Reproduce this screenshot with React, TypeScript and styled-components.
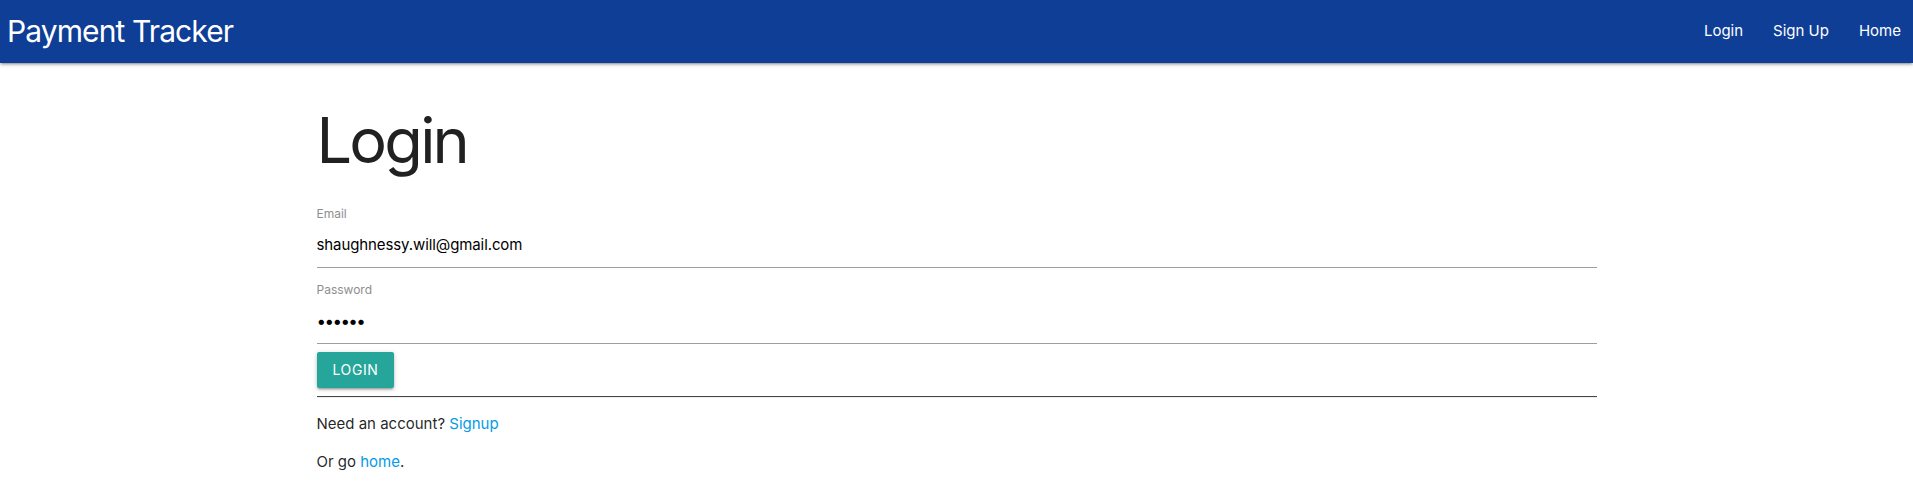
import React from 'react';
import styled, { createGlobalStyle } from 'styled-components';

const GlobalStyle = createGlobalStyle`
  html {
    font-size: 15px;
  }
  body {
    margin: 0;
    background: #fff;
    font-family: Inter, "Noto Sans", Roboto, sans-serif;
    color: rgba(0, 0, 0, 0.87);
    line-height: 1.5;
  }
`;

const Nav = styled.nav`
  height: 63px;
  background: #0e3e96;
  color: #fff;
  display: flex;
  align-items: center;
  justify-content: space-between;
  box-shadow: 0 2px 2px 0 rgba(0, 0, 0, 0.14), 0 3px 1px -2px rgba(0, 0, 0, 0.12),
    0 1px 5px 0 rgba(0, 0, 0, 0.2);
  position: relative;
`;

const Brand = styled.a`
  color: #fff;
  text-decoration: none;
  font-size: 30px;
  margin-left: 7px;
  letter-spacing: -0.9px;
`;

const NavLinks = styled.ul`
  display: flex;
  list-style: none;
  margin: 0;
  padding: 0;
  height: 100%;

  li:last-child a {
    padding-right: 12px;
  }
`;

const NavLink = styled.a`
  display: flex;
  align-items: center;
  height: 63px;
  padding: 0 15px;
  color: #fff;
  text-decoration: none;
  font-size: 15px;
`;

const Container = styled.main`
  max-width: 1280px;
  margin: 0 auto;
`;

const Title = styled.h1`
  font-size: 63px;
  line-height: 110%;
  font-weight: 400;
  color: #212121;
  margin: 43px 0 25.2px;
  letter-spacing: -2.8px;
`;

const Field = styled.div`
  padding-top: 6px;
`;

const Label = styled.label`
  display: block;
  font-size: 12px;
  line-height: 16px;
  color: #8e8e8e;
`;

const Input = styled.input<{ $secret?: boolean }>`
  display: block;
  box-sizing: content-box;
  width: 100%;
  height: 45px;
  margin: 0 0 8px;
  padding: 0;
  border: none;
  border-bottom: 1px solid #9e9e9e;
  outline: none;
  background: transparent;
  font-family: inherit;
  font-size: ${(p) => (p.$secret ? '17px' : '15px')};
  letter-spacing: ${(p) => (p.$secret ? '-1.6px' : '-0.1px')};
  color: #000;
`;

const Button = styled.button`
  height: 36px;
  line-height: 36px;
  padding: 0 16px;
  border: none;
  border-radius: 2px;
  background: #26a69a;
  color: #fff;
  font-family: inherit;
  font-size: 14px;
  letter-spacing: 0.6px;
  text-transform: uppercase;
  box-shadow: 0 2px 2px 0 rgba(0, 0, 0, 0.14), 0 3px 1px -2px rgba(0, 0, 0, 0.12),
    0 1px 5px 0 rgba(0, 0, 0, 0.2);
  cursor: pointer;
`;

const Divider = styled.hr`
  margin: 8px 0 7px;
  border: 1px inset #eee;
  border-top-color: #9a9a9a;
  border-left: none;
  border-right: none;
  height: 0;
`;

const Text = styled.p`
  font-size: 15px;
  line-height: 22.5px;
  margin: 15px 0;
`;

const Link = styled.a`
  color: #039be5;
  text-decoration: none;
`;

export default function App() {
  return (
    <>
      <GlobalStyle />
      <Nav>
        <Brand href="#">Payment Tracker</Brand>
        <NavLinks>
          {['Login', 'Sign Up', 'Home'].map((label) => (
            <li key={label}>
              <NavLink href="#">{label}</NavLink>
            </li>
          ))}
        </NavLinks>
      </Nav>
      <Container>
        <Title>Login</Title>
        <form onSubmit={(e) => e.preventDefault()}>
          <Field>
            <Label htmlFor="email">Email</Label>
            <Input id="email" type="email" defaultValue="shaughnessy.will@gmail.com" />
          </Field>
          <Field>
            <Label htmlFor="password">Password</Label>
            <Input id="password" type="password" defaultValue="secret" $secret />
          </Field>
          <Button type="submit">Login</Button>
        </form>
        <Divider />
        <Text>
          Need an account? <Link href="#">Signup</Link>
        </Text>
        <Text>
          Or go <Link href="#">home</Link>.
        </Text>
      </Container>
    </>
  );
}
